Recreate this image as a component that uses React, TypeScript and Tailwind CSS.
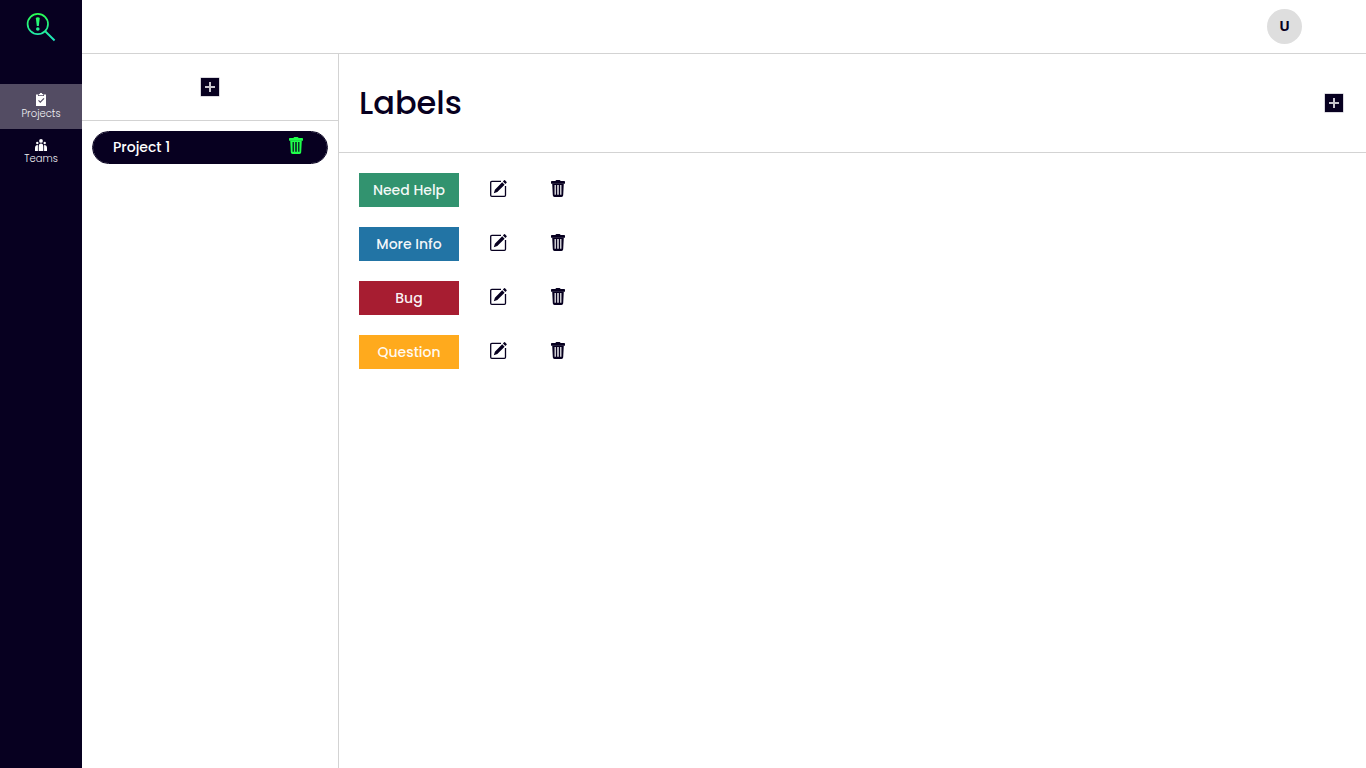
import React from "react";

const labels = [
  { name: "Need Help", color: "bg-[#32936f]" },
  { name: "More Info", color: "bg-[#2274a5]" },
  { name: "Bug", color: "bg-[#a71d31]" },
  { name: "Question", color: "bg-[#ffaa1d]" },
];

function Logo() {
  return (
    <svg width="30" height="30" viewBox="0 0 30 30" fill="none" aria-hidden="true">
      <defs>
        <linearGradient id="logo" x1="0" y1="0" x2="0" y2="30" gradientUnits="userSpaceOnUse">
          <stop stopColor="#2aff4b" />
          <stop offset="1" stopColor="#1fe6c8" />
        </linearGradient>
      </defs>
      <circle cx="11.8" cy="12" r="10.2" stroke="url(#logo)" strokeWidth="1.7" />
      <path d="M19.2 19.3 28.6 28.5" stroke="url(#logo)" strokeWidth="1.9" />
      <path d="M9.9 6.4q0-1.2 1.9-1.2t1.9 1.2l-.9 7.6h-2z" fill="url(#logo)" />
      <circle cx="11.8" cy="17" r="1.8" fill="url(#logo)" />
    </svg>
  );
}

function ClipboardIcon() {
  return (
    <svg width="12" height="13" viewBox="0 0 12 13" aria-hidden="true">
      <path fill="#fff" d="M1 1.5h2V3h6V1.5h2V13H1z" />
      <path fill="#fff" d="M3.7 1h1.1a1.2 1.2 0 0 1 2.4 0h1.1v1.3H3.7z" />
      <path d="m3.5 7.3 1.8 1.8L9 5.4" fill="none" stroke="#534c63" strokeWidth="1.2" />
    </svg>
  );
}

function TeamIcon() {
  return (
    <svg width="12" height="12" viewBox="0 0 12 12" fill="#fff" aria-hidden="true">
      <circle cx="6" cy="1.9" r="1.9" />
      <circle cx="2.3" cy="4" r="1.2" />
      <circle cx="9.7" cy="4" r="1.2" />
      <path d="M3.7 12V7.4Q3.7 4.4 6 4.4t2.3 3V12zM0 12V8.9Q0 6 2.9 5.9V12zM12 12V8.9q0-2.9-2.9-3V12z" />
    </svg>
  );
}

function TrashIcon() {
  return (
    <svg width="14" height="17" viewBox="0 0 14 17" aria-hidden="true">
      <path
        fill="currentColor"
        d="M4.5 1q.1-1 1-1h3q.9 0 1 1h3.7q.8 0 .8.8v1.4q0 .6-.6.6H.6Q0 3.8 0 3.2V1.8Q0 1 .8 1z"
      />
      <path
        fill="currentColor"
        fillRule="evenodd"
        d="M1.2 3.5h11.6l-.6 11.8q-.1 1.7-1.7 1.7h-7q-1.6 0-1.7-1.7zM3.6 5v9.8h1.2V5zm2.7 0v9.8h1.4V5zm2.9 0v9.8h1.2V5z"
      />
    </svg>
  );
}

function EditIcon() {
  return (
    <svg width="17" height="17" viewBox="0 0 17 17" aria-hidden="true">
      <path
        d="M11 1.4H1.8Q.7 1.4.7 2.5v12.7q0 1.1 1.1 1.1h12.6q1.1 0 1.1-1.1V6"
        fill="none"
        stroke="currentColor"
        strokeWidth="1.3"
      />
      <path fill="currentColor" d="m12.2 2.3 2.4 2.4-7.3 7.4-3.5 1.2 1.1-3.6zM12.9 1.5 14.1.3q.4-.4.9 0l1.6 1.6q.4.4 0 .9L15.4 4z" />
    </svg>
  );
}

function AddButton({ label }: { label: string }) {
  return (
    <button type="button" aria-label={label} className="flex size-5 items-center justify-center text-[#070020]">
      <svg width="20" height="20" viewBox="0 0 20 20" aria-hidden="true">
        <path fill="#b5b3bd" d="M.5.5h19v19H.5z" />
        <path fill="currentColor" d="M1 1h18v18H1z" />
        <path d="M5 10h10M10 5v10" stroke="#c8c6ce" strokeWidth="2" />
      </svg>
    </button>
  );
}

export default function App() {
  return (
    <div className="flex min-h-screen bg-white font-['Poppins','Inter',sans-serif] text-[#070020]">
      <nav className="w-[82px] shrink-0 bg-[#070020]">
        <a href="#home" aria-label="Home" className="flex h-[84px] justify-center pt-3">
          <Logo />
        </a>
        <a href="#projects" className="flex h-[45px] flex-col items-center bg-[#534c63] pt-2 text-[10px] leading-4 font-light text-[#f0eff3]">
          <span className="flex h-[14px] items-end"><ClipboardIcon /></span>
          Projects
        </a>
        <a href="#teams" className="flex h-[45px] flex-col items-center pt-2 text-[10px] leading-4 font-light text-[#f0eff3]">
          <span className="flex h-[14px] items-end"><TeamIcon /></span>
          Teams
        </a>
      </nav>

      <div className="flex min-w-0 grow flex-col">
        <header className="flex h-[54px] shrink-0 items-center justify-end border-b border-[#d3d3d3] pr-16">
          <button type="button" className="size-[35px] rounded-full bg-[#dedede] pb-0.5 font-['Noto_Sans',sans-serif] text-sm font-bold">
            U
          </button>
        </header>

        <div className="flex grow">
          <aside className="w-[257px] shrink-0 border-r border-[#d3d3d3]">
            <div className="flex h-[67px] items-center justify-center border-b border-[#d3d3d3]">
              <AddButton label="Add project" />
            </div>
            <div className="p-[10px]">
              <div className="h-[33px] rounded-full border border-[#070020]">
                <div className="flex h-full items-center justify-between rounded-full bg-[#070020] pr-6 pl-5 text-white">
                  <a href="#project-1" className="pb-0.5 text-sm font-medium">Project 1</a>
                  <button type="button" aria-label="Delete Project 1" className="pb-1 text-[#1fff4b]">
                    <TrashIcon />
                  </button>
                </div>
              </div>
            </div>
          </aside>

          <main className="min-w-0 grow">
            <div className="flex h-[99px] items-center justify-between border-b border-[#d3d3d3] pr-[22px] pl-5">
              <h1 className="text-[32px] leading-10 font-medium">Labels</h1>
              <AddButton label="Add label" />
            </div>
            <ul className="flex flex-col gap-5 px-5 py-5">
              {labels.map((item) => (
                <li key={item.name} className="flex h-[34px] items-center">
                  <span className={`flex h-full w-[100px] items-center justify-center text-sm font-medium text-white/95 ${item.color}`}>
                    {item.name}
                  </span>
                  <button type="button" aria-label={`Edit ${item.name}`} className="ml-[31px] pb-1">
                    <EditIcon />
                  </button>
                  <button type="button" aria-label={`Delete ${item.name}`} className="ml-11 pb-1">
                    <TrashIcon />
                  </button>
                </li>
              ))}
            </ul>
          </main>
        </div>
      </div>
    </div>
  );
}
